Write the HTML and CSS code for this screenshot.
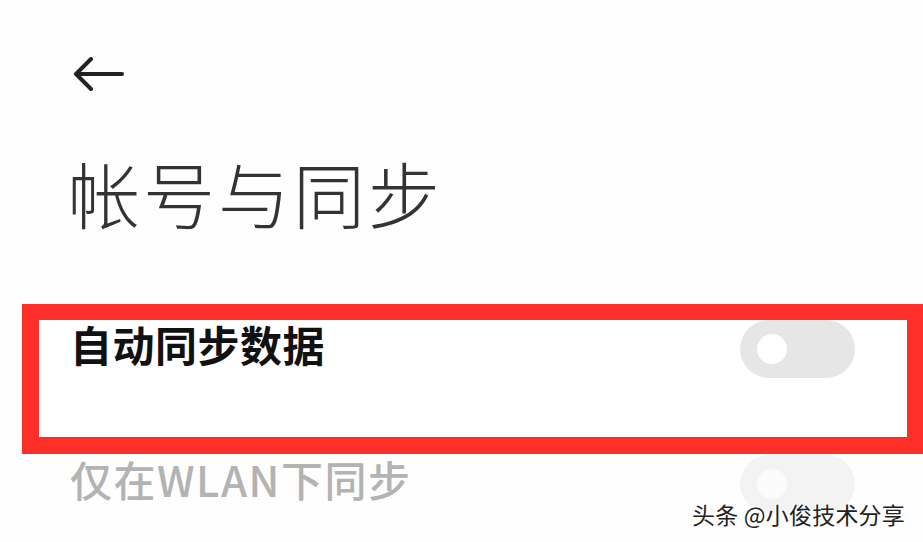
FILE: index.html
```html
<!DOCTYPE html>
<html lang="zh-CN">
<head>
    <meta charset="UTF-8">
    <meta name="viewport" content="width=device-width, initial-scale=1.0">
    <title>帐号与同步</title>
    <link rel="stylesheet" href="styles.css">
</head>
<body>
    <div class="screen">
        <!-- Top bar -->
        <div class="topbar">
            <svg class="back" width="52" height="36" viewBox="0 0 52 36">
                <path d="M3 17 H49 M18 2 L3 17 L18 32" fill="none" stroke="#222" stroke-width="4" stroke-linecap="round" stroke-linejoin="round"/>
            </svg>
        </div>

        <h1 class="title">帐号与同步</h1>

        <!-- Settings list -->
        <div class="list">
            <div class="mark">
                <div class="row">
                    <span class="label">自动同步数据</span>
                    <span class="switch"><span class="knob"></span></span>
                </div>
            </div>
            <div class="row row-off">
                <span class="label">仅在WLAN下同步</span>
                <span class="switch"><span class="knob"></span></span>
            </div>
        </div>

        <div class="watermark">头条 @小俊技术分享</div>
    </div>
</body>
</html>
```

FILE: styles.css
```css
body {
    margin: 0;
    background: #fff;
    font-family: "Noto Sans CJK SC", "Noto Sans", sans-serif;
    color: #222;
}
.screen {
    position: relative;
    width: 923px;
    height: 542px;
    overflow: hidden;
    background: #fefefe;
}
.topbar {
    padding: 57px 0 0 73px;
    height: 40px;
}
.back {
    display: block;
}
.title {
    margin: 50px 0 0 68px;
    font-size: 72px;
    font-weight: 300;
    line-height: 90px;
    color: #333;
    letter-spacing: 3px;
}
.list {
    margin-top: 67px;
}
.mark {
    margin-left: 22px;
    border: 16px solid #fe2f29;
    border-left-width: 17px;
    border-bottom-width: 17px;
    height: 117px;
    background: #fff;
}
.row {
    display: flex;
    justify-content: space-between;
    align-items: flex-start;
    padding: 0 52px 0 31px;
}
.label {
    font-size: 42px;
    font-weight: 700;
    line-height: 48px;
    letter-spacing: 0.5px;
    color: #111;
}
.switch {
    width: 115px;
    height: 58px;
    border-radius: 29px;
    background: #e6e6e6;
    display: flex;
    align-items: center;
    padding-left: 17px;
    box-sizing: border-box;
}
.knob {
    width: 30px;
    height: 30px;
    border-radius: 50%;
    background: #fff;
}
.row-off {
    padding: 1px 68px 0 70px;
}
.row-off .label {
    font-size: 42px;
    letter-spacing: 1.5px;
    color: #b3b3b3;
    font-weight: 500;
}
.row-off .switch {
    background: #f3f3f3;
}
.row-off .knob {
    background: #fbfbfb;
}
.watermark {
    position: absolute;
    right: 18px;
    bottom: 14px;
    font-size: 23px;
    line-height: 28px;
    letter-spacing: 0.2px;
    color: #222;
    text-shadow: 1px 1px 0 #fff, -1px -1px 0 #fff, 1px -1px 0 #fff, -1px 1px 0 #fff;
}
```
